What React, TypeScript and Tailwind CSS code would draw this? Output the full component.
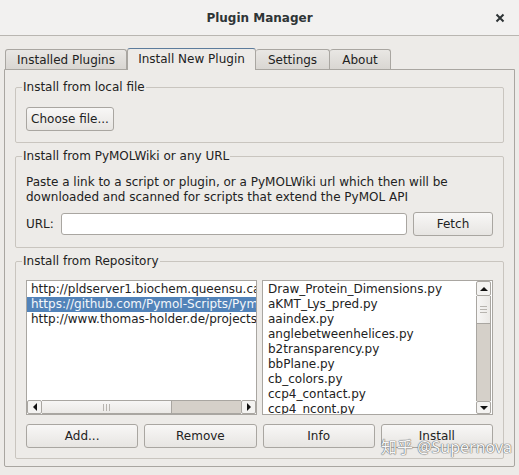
import React from 'react'

const repos = [
    'http://pldserver1.biochem.queensu.ca/~rlc/work/pymol/',
    'https://github.com/Pymol-Scripts/Pymol-script-repo',
    'http://www.thomas-holder.de/projects/pymol/repository/',
]

const scripts = [
    'Draw_Protein_Dimensions.py',
    'aKMT_Lys_pred.py',
    'aaindex.py',
    'anglebetweenhelices.py',
    'b2transparency.py',
    'bbPlane.py',
    'cb_colors.py',
    'ccp4_contact.py',
    'ccp4_ncont.py',
    'ccp4_pisa.py',
]

function Button({ label, className = '' }: { label: string; className?: string }) {
    return (
        <button className={'h-[24px] border border-[#a9a6a1] rounded-[3px] bg-gradient-to-b from-[#f8f7f6] to-[#e7e5e2] text-[12px] text-[#222] leading-none ' + className}>
            {label}
        </button>
    )
}

function Arrow({ dir }: { dir: 'left' | 'right' | 'up' | 'down' }) {
    const pts = {
        left: '5,1 5,9 1,5',
        right: '1,1 1,9 5,5',
        up: '1,5 9,5 5,1',
        down: '1,1 9,1 5,5',
    }[dir]
    const vertical = dir === 'up' || dir === 'down'
    return (
        <svg width={vertical ? 10 : 6} height={vertical ? 6 : 10} viewBox={vertical ? '0 0 10 6' : '0 0 6 10'}>
            <polygon points={pts} fill="#111" />
        </svg>
    )
}

function Group({ title, children, className = '' }: { title: string; children: React.ReactNode; className?: string }) {
    return (
        <fieldset className="border border-[#c9c5bf] rounded-[2px] m-0 p-0">
            <legend className="ml-[6px] px-[1px] leading-[14px] text-[12px]">{title}</legend>
            <div className={'px-[10px] ' + className}>{children}</div>
        </fieldset>
    )
}

export default function App() {
    return (
        <div className="relative w-[519px] h-[475px] overflow-hidden bg-[#edebe8] text-[#222] text-[12px] font-['DejaVu_Sans','Liberation_Sans',sans-serif]">
            {/* title bar */}
            <div className="relative h-[36px] flex items-center justify-center bg-[#f2f1f0] border-b border-[#b9b6b1]">
                <span className="font-bold text-[12px] text-[#2e3436]">Plugin Manager</span>
                <svg className="absolute right-[14px] top-[13px]" width="10" height="10" viewBox="0 0 10 10">
                    <path d="M1.5 1.5 L8.5 8.5 M8.5 1.5 L1.5 8.5" stroke="#2e3436" strokeWidth="2" />
                </svg>
            </div>

            {/* tabs */}
            <div className="flex items-end h-[21px] mt-[12px] pl-[5px]">
                <div className="w-[122px] h-[20px] flex items-center justify-center border border-b-0 border-[#a9a6a1] rounded-t-[3px] bg-gradient-to-b from-[#e9e7e4] to-[#d9d6d2]">Installed Plugins</div>
                <div className="relative z-10 w-[129px] h-[22px] -mb-px flex items-center justify-center border border-b-0 border-[#a9a6a1] border-t-[#5d7c9c] rounded-t-[3px] bg-[#edebe8] pb-[1px]">Install New Plugin</div>
                <div className="w-[74px] h-[20px] flex items-center justify-center border border-b-0 border-l-0 border-[#a9a6a1] rounded-t-[3px] bg-gradient-to-b from-[#e9e7e4] to-[#d9d6d2]">Settings</div>
                <div className="w-[61px] h-[20px] flex items-center justify-center border border-b-0 border-l-0 border-[#a9a6a1] rounded-t-[3px] bg-gradient-to-b from-[#e9e7e4] to-[#d9d6d2]">About</div>
            </div>

            {/* page */}
            <div className="ml-[4px] w-[511px] border border-[#a9a6a1] rounded-b-[2px] bg-[#edebe8] pt-[10px] pb-[7px] px-[10px] flex flex-col gap-[6px]">
                <Group title="Install from local file" className="pt-[13px] pb-[11px]">
                    <Button label="Choose file..." className="w-[88px]" />
                </Group>

                <Group title="Install from PyMOLWiki or any URL" className="pt-[12px] pb-[11px]">
                    <p className="leading-[15px]">
                        Paste a link to a script or plugin, or a PyMOLWiki url which then will be<br />
                        downloaded and scanned for scripts that extend the PyMOL API
                    </p>
                    <div className="mt-[7px] h-[24px] flex items-center">
                        <span>URL:</span>
                        <div className="ml-[7px] flex-1 h-[22px] bg-white border border-[#a9a6a1] rounded-[3px]" />
                        <Button label="Fetch" className="ml-[6px] w-[80px]" />
                    </div>
                </Group>

                <Group title="Install from Repository" className="pt-[12px] pb-[10px]">
                    <div className="grid grid-cols-2 gap-[5px] h-[135px]">
                        {/* repository urls */}
                        <div className="flex flex-col border border-[#a9a6a1] bg-white overflow-hidden">
                            <div className="flex-1 overflow-hidden pt-[1px]">
                                {repos.map((r, i) => (
                                    <div key={r} className={'leading-[15px] pl-[4px] whitespace-nowrap ' + (i === 1 ? 'bg-[#5283b9] text-[#f4f7fb]' : '')}>{r}</div>
                                ))}
                            </div>
                            <div className="h-[14px] flex">
                                <div className="w-[15px] flex items-center justify-center border border-[#a9a6a1] rounded-[2px] bg-[#f4f3f1]"><Arrow dir="left" /></div>
                                <div className="w-[129px] flex items-center justify-center gap-[2px] border-y border-[#a9a6a1] bg-gradient-to-b from-[#f7f6f5] to-[#ebe9e6]">
                                    <span className="w-px h-[7px] bg-[#b7b4af]" />
                                    <span className="w-px h-[7px] bg-[#b7b4af]" />
                                    <span className="w-px h-[7px] bg-[#b7b4af]" />
                                </div>
                                <div className="flex-1 bg-[#d5d0c9] border-y border-l border-[#a9a6a1]" />
                                <div className="w-[15px] flex items-center justify-center border border-[#a9a6a1] rounded-[2px] bg-[#f4f3f1]"><Arrow dir="right" /></div>
                            </div>
                        </div>

                        {/* scripts in selected repository */}
                        <div className="flex border border-[#a9a6a1] bg-white overflow-hidden">
                            <div className="flex-1 overflow-hidden pl-[5px] pt-[1px]">
                                {scripts.map((s) => (
                                    <div key={s} className="leading-[15px] whitespace-nowrap">{s}</div>
                                ))}
                            </div>
                            <div className="w-[15px] mr-px flex flex-col">
                                <div className="h-[15px] flex items-center justify-center border border-[#a9a6a1] rounded-[2px] bg-[#f4f3f1]"><Arrow dir="up" /></div>
                                <div className="h-[27px] flex flex-col items-center justify-center gap-[2px] border-x border-[#a9a6a1] bg-gradient-to-r from-[#f7f6f5] to-[#ebe9e6]">
                                    <span className="h-px w-[7px] bg-[#b7b4af]" />
                                    <span className="h-px w-[7px] bg-[#b7b4af]" />
                                    <span className="h-px w-[7px] bg-[#b7b4af]" />
                                </div>
                                <div className="flex-1 bg-[#d5d0c9] border-x border-t border-[#a9a6a1]" />
                                <div className="h-[13px] flex items-center justify-center border border-[#a9a6a1] rounded-[2px] bg-[#f4f3f1]"><Arrow dir="down" /></div>
                            </div>
                        </div>
                    </div>

                    <div className="mt-[9px] grid grid-cols-4 gap-[6px]">
                        <Button label="Add..." />
                        <Button label="Remove" />
                        <Button label="Info" />
                        <Button label="Install" />
                    </div>
                </Group>
            </div>

            <span className="absolute left-[381px] top-[436px] whitespace-nowrap leading-[22px] text-[16px] text-[#f7f7f7] font-['Noto_Sans','Noto_Sans_CJK_SC',sans-serif] [text-shadow:0_0_1px_#6f6f6f,0_0_1px_#6f6f6f,0_0_1px_#6f6f6f]">知乎 @Supernova</span>
        </div>
    )
}
